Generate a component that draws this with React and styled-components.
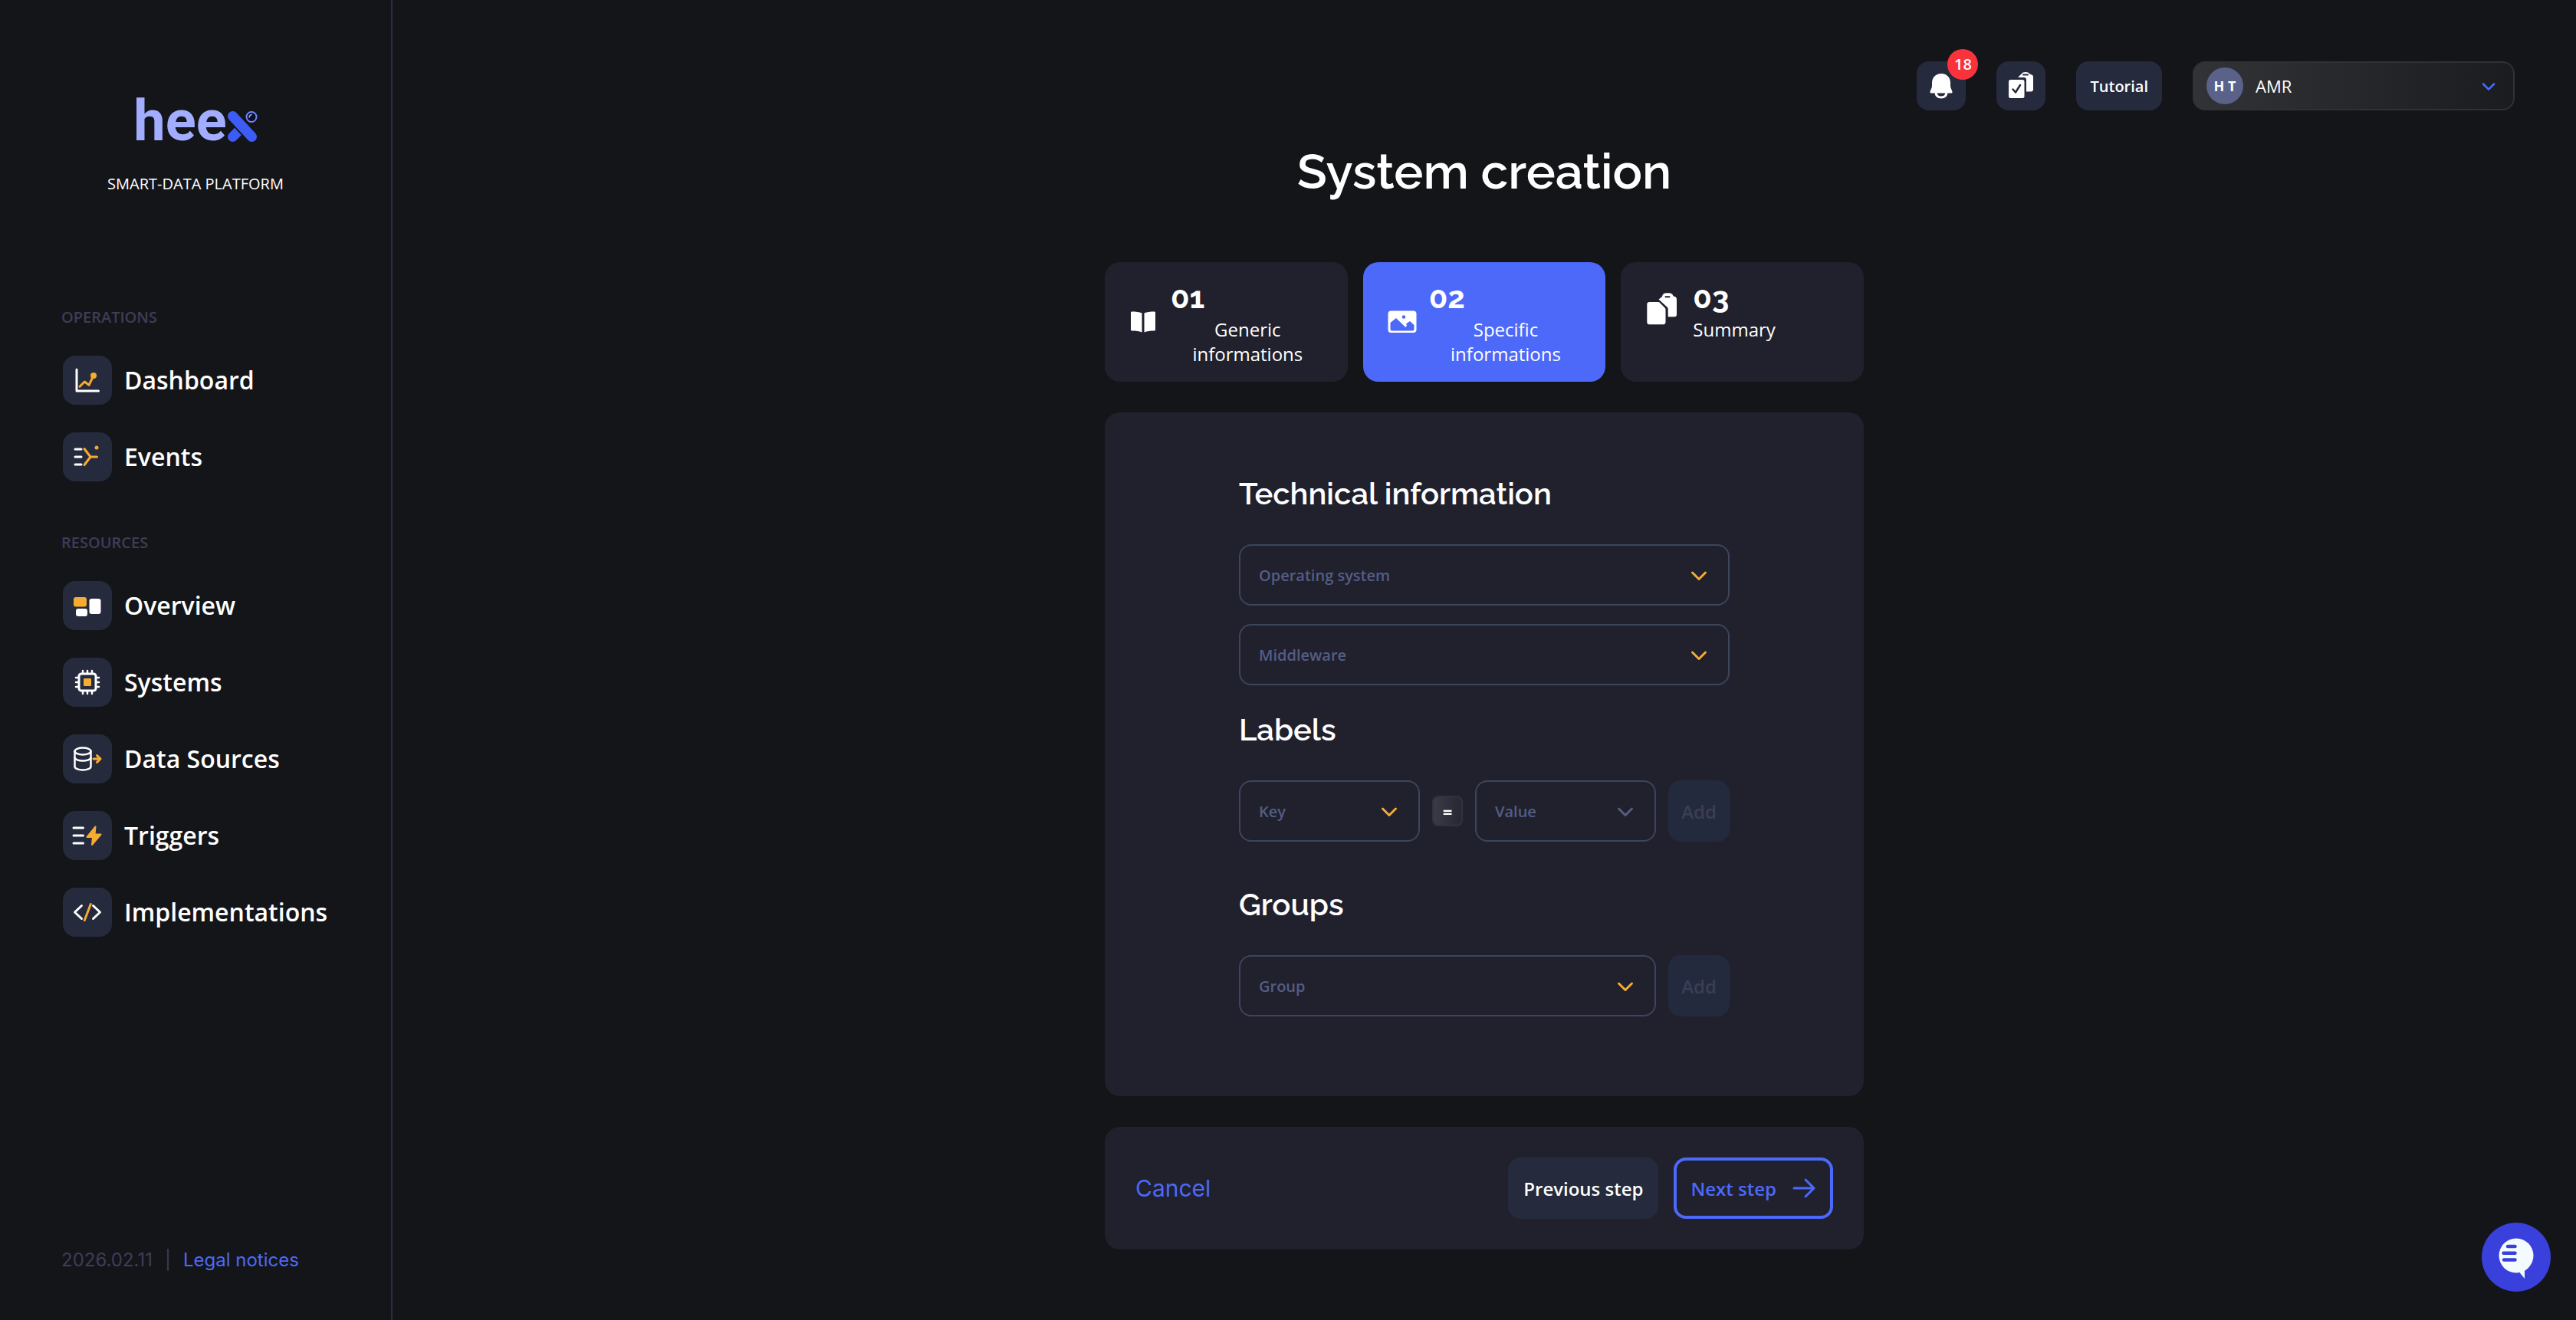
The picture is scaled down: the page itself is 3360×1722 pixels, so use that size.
import React from "react"
import styled, { createGlobalStyle } from "styled-components"

const colors = {
  bg: "#141519",
  panel: "#20212d",
  tile: "#252a3d",
  line: "#2c2b41",
  border: "#3c455e",
  muted: "#3d3d57",
  placeholder: "#545d85",
  primary: "#4c69f9",
  orange: "#f6ab33",
  white: "#ffffff",
}

const GlobalStyle = createGlobalStyle`
  *,
  *::before,
  *::after {
    box-sizing: border-box;
  }

  body {
    margin: 0;
    background: ${colors.bg};
    color: ${colors.white};
    font-family: "Open Sans", sans-serif;
    font-size: 24px;
  }

  h1,
  h2,
  p,
  ul {
    margin: 0;
    padding: 0;
  }

  button,
  select {
    font-family: inherit;
    cursor: pointer;
  }

  a {
    text-decoration: none;
  }
`

const Layout = styled.div`
  display: flex;
  min-height: 100vh;
`

/* ---------- sidebar ---------- */

const Sidebar = styled.aside`
  display: flex;
  flex-direction: column;
  flex: none;
  width: 512px;
  padding: 112px 80px 62px;
  border-right: 2px solid ${colors.line};
`

const Brand = styled.div`
  display: flex;
  flex-direction: column;
  align-items: center;
  gap: 20px;
`

const Logo = styled.a`
  display: flex;
  align-items: flex-end;
  height: 92px;
  color: #a3adff;
  font-family: Roboto, sans-serif;
  font-size: 74px;
  font-weight: 700;
  line-height: 92px;

  svg {
    width: 40px;
    height: 42px;
    margin-bottom: 18px;
  }
`

const Tagline = styled.p`
  font-size: 20px;
  line-height: 32px;
`

const NavGroup = styled.nav`
  display: flex;
  flex-direction: column;
  margin-top: ${(props) => (props.$first ? "142px" : "64px")};
`

const NavTitle = styled.h2`
  margin-bottom: 34px;
  color: ${colors.muted};
  font-size: 20px;
  font-weight: 600;
  line-height: 32px;
`

const NavList = styled.ul`
  display: flex;
  flex-direction: column;
  gap: 36px;
  list-style: none;
`

const NavLink = styled.a`
  display: flex;
  align-items: center;
  gap: 16px;
  padding-left: 2px;
  color: ${colors.white};
  font-size: 32px;
  font-weight: 600;
  line-height: 64px;
  white-space: nowrap;
`

const Tile = styled.svg`
  flex: none;
  width: 64px;
  height: 64px;
  border-radius: 16px;
  background: ${colors.tile};
  fill: none;
  stroke: ${colors.white};
  stroke-width: 3;
  stroke-linecap: round;
  stroke-linejoin: round;
`

const SideFooter = styled.footer`
  display: flex;
  gap: 16px;
  margin-top: auto;
  color: ${colors.muted};
  font-family: Inter, sans-serif;
  line-height: 32px;

  a {
    color: ${colors.primary};
  }
`

/* ---------- top bar ---------- */

const Main = styled.main`
  display: flex;
  flex-direction: column;
  flex: 1;
  padding-bottom: 80px;
`

const TopBar = styled.header`
  display: flex;
  justify-content: flex-end;
  gap: 40px;
  padding: 80px 80px 0;
`

const IconButton = styled.button`
  position: relative;
  width: 64px;
  height: 64px;
  padding: 0;
  border: 0;
  border-radius: 16px;
  background: ${colors.tile};

  svg {
    display: block;
  }
`

const Badge = styled.span`
  position: absolute;
  top: -16px;
  right: -16px;
  width: 40px;
  height: 40px;
  border-radius: 50%;
  background: #f8333c;
  color: ${colors.white};
  font-size: 20px;
  font-weight: 600;
  line-height: 40px;
`

const TutorialButton = styled.button`
  height: 64px;
  padding: 0 18px;
  border: 0;
  border-radius: 16px;
  background: ${colors.tile};
  color: ${colors.white};
  font-size: 20px;
  font-weight: 600;
`

const AccountBox = styled.div`
  display: grid;
  grid-template-columns: 48px 1fr 20px;
  align-items: center;
  width: 420px;
  height: 64px;
  padding: 0 22px 0 16px;
  border: 2px solid #303136;
  border-radius: 16px;
  background: linear-gradient(90deg, #323336, #1b1c20);

  svg {
    grid-area: 1 / 3;
    pointer-events: none;
  }
`

const Avatar = styled.span`
  grid-area: 1 / 1;
  width: 48px;
  height: 48px;
  border-radius: 50%;
  background: #5a6289;
  font-size: 18px;
  font-weight: 700;
  line-height: 48px;
  text-align: center;
`

const AccountSelect = styled.select`
  grid-area: 1 / 2 / 2 / 4;
  height: 48px;
  padding: 0 16px;
  border: 0;
  outline: 0;
  appearance: none;
  background: transparent;
  color: ${colors.white};
  font-size: 22px;
`

/* ---------- content ---------- */

const Title = styled.h1`
  margin: 40px 0 78px;
  font-family: Raleway, Lato, sans-serif;
  font-size: 64px;
  font-weight: 600;
  line-height: 80px;
  text-align: center;
`

const Content = styled.div`
  display: flex;
  flex-direction: column;
  gap: 40px;
  width: 100%;
  max-width: 990px;
  margin: 0 auto;
`

const Steps = styled.div`
  display: grid;
  grid-template-columns: repeat(3, 1fr);
  gap: 20px;
`

const Step = styled.button`
  display: flex;
  align-items: flex-start;
  padding: 20px 30px;
  border: 0;
  border-radius: 20px;
  background: ${(props) => (props.$active ? colors.primary : colors.panel)};
  color: ${colors.white};
  text-align: left;
`

const StepBody = styled.span`
  display: flex;
  align-items: center;
  gap: 16px;
  width: 100%;

  svg {
    flex: none;
  }
`

const StepText = styled.span`
  display: flex;
  flex: 1;
  flex-direction: column;
  font-size: 24px;
  line-height: 32px;
`

const StepNumber = styled.span`
  font-family: Raleway, Lato, sans-serif;
  font-size: 40px;
  font-weight: 700;
  line-height: 52px;
`

const StepLabel = styled.span`
  text-align: ${(props) => (props.$center ? "center" : "left")};
`

const Panel = styled.section`
  padding: 82px 175px 104px;
  border-radius: 20px;
  background: ${colors.panel};
`

const SectionTitle = styled.h2`
  margin: ${(props) => props.$top || 0}px 0 42px;
  font-family: Raleway, Lato, sans-serif;
  font-size: 40px;
  font-weight: 600;
  line-height: 48px;
`

const Fields = styled.div`
  display: flex;
  flex-direction: column;
  gap: 24px;
`

const Row = styled.div`
  display: flex;
  align-items: center;
  gap: 16px;
`

const SelectBox = styled.div`
  display: grid;
  grid-template-columns: 1fr 24px 26px;
  flex: 1;
  align-items: center;
  height: 80px;
  border: 2px solid ${colors.border};
  border-radius: 16px;
  color: ${(props) => (props.$disabled ? colors.placeholder : colors.orange)};

  svg {
    grid-area: 1 / 2;
    pointer-events: none;
  }
`

const Select = styled.select`
  grid-area: 1 / 1 / 2 / 4;
  width: 100%;
  height: 76px;
  padding: 0 24px;
  border: 0;
  outline: 0;
  appearance: none;
  background: transparent;
  color: ${colors.placeholder};
  font-size: 20px;
  font-weight: 600;
  opacity: 1;
`

const Equals = styled.span`
  width: 40px;
  height: 40px;
  border: 2px solid #31323c;
  border-radius: 8px;
  background: linear-gradient(90deg, #3a3b45, #262732);
  font-size: 22px;
  font-weight: 700;
  line-height: 36px;
  text-align: center;
`

const AddButton = styled.button`
  width: 80px;
  height: 80px;
  padding: 0;
  border: 0;
  border-radius: 16px;
  background: #242a3d;
  color: #3b3e56;
  font-size: 24px;
  font-weight: 600;
`

const Actions = styled.section`
  display: flex;
  align-items: center;
  gap: 20px;
  padding: 40px;
  border-radius: 20px;
  background: ${colors.panel};
`

const CancelButton = styled.button`
  margin-right: auto;
  padding: 0;
  border: 0;
  background: none;
  color: ${colors.primary};

  && {
    font-family: Inter, sans-serif;
    font-size: 30px;
  }
`

const StepButton = styled.button`
  display: flex;
  align-items: center;
  gap: 20px;
  height: 80px;
  padding: 0 ${(props) => (props.$outline ? 18 : 20)}px;
  border: ${(props) => (props.$outline ? `4px solid ${colors.primary}` : 0)};
  border-radius: 16px;
  background: ${(props) => (props.$outline ? "transparent" : colors.tile)};
  color: ${(props) => (props.$outline ? colors.primary : colors.white)};
  font-size: 24px;
  font-weight: 600;
`

const ChatButton = styled.button`
  position: fixed;
  right: 33px;
  bottom: 37px;
  width: 90px;
  height: 90px;
  padding: 0;
  border: 0;
  border-radius: 50%;
  background: #3940dc;

  svg {
    display: block;
  }
`

/* ---------- icons ---------- */

const LogoMark = () => (
  <svg viewBox="0 0 40 42" fill="none" strokeLinecap="round">
    <path d="M7.500 34.500L15 27" stroke="#3d5bf5" strokeWidth="13" />
    <path d="M7.500 7.500L32.500 34.500" stroke={colors.bg} strokeWidth="17" />
    <path d="M7.500 7.500L32.500 34.500" stroke="#3d5bf5" strokeWidth="13" />
    <circle cx="32" cy="8.500" r="8.500" fill={colors.bg} />
    <circle cx="32" cy="8.500" r="6.500" fill="#0b0f2a" stroke="#7088ff" strokeWidth="2" />
    <path d="M29 9a4 4 0 0 1 3-3.500" stroke="#a3adff" strokeWidth="1.500" />
  </svg>
)

const Chevron = ({ size = 24, color = "currentColor" }) => (
  <svg width={size} height={size} viewBox="0 0 24 24" fill="none" stroke={color} strokeWidth="3" strokeLinecap="round" strokeLinejoin="round">
    <path d="M3.500 9l8.500 8.500l8.500-8.500" />
  </svg>
)

const DashboardIcon = () => (
  <>
    <path d="M18 18v28h28.500" />
    <path d="M22 40.300l6.300-6.300l5.700 4.300l6-12.300" stroke={colors.orange} />
    <circle cx="40" cy="26" r="4" fill={colors.orange} stroke="none" />
  </>
)

const EventsIcon = () => (
  <>
    <path d="M16 22h8M16 32h8M16 42h8" />
    <path d="M28 21.500l8 10.500l-8 10.500M36 32h8.500" stroke={colors.orange} />
    <circle cx="44" cy="20" r="2.500" fill={colors.orange} stroke="none" />
  </>
)

const OverviewIcon = () => (
  <g stroke="none" fill={colors.white}>
    <rect x="14" y="21" width="17" height="12.500" rx="3" fill={colors.orange} />
    <rect x="34.500" y="23" width="15" height="20" rx="3" />
    <rect x="17" y="36" width="15" height="10" rx="3" />
  </g>
)

const SystemsIcon = () => (
  <>
    <rect x="21" y="21" width="22" height="22" rx="3" />
    <path
      d="M26 20v-3M32 20v-3M38 20v-3M26 47v-3M32 47v-3M38 47v-3M20 26h-3M20 32h-3M20 38h-3M47 26h-3M47 32h-3M47 38h-3"
      strokeWidth="2.500"
    />
    <rect x="27" y="27" width="10" height="10" rx="1" fill={colors.orange} stroke="none" />
  </>
)

const DataSourcesIcon = () => (
  <>
    <g strokeWidth="2.500">
      <ellipse cx="26" cy="22" rx="10.500" ry="4.500" />
      <path d="M15.500 22v20c0 2.500 4.500 4.500 10.500 4.500s10.500-2 10.500-4.500v-20" />
      <path d="M15.500 31c2 2.500 6 3.500 10.500 3.500s8.500-1 10.500-3.500" />
    </g>
    <path d="M40 32h9M44.500 27.500l4.500 4.500l-4.500 4.500" stroke={colors.orange} />
  </>
)

const TriggersIcon = () => (
  <>
    <path d="M14 22h12.500M14 32h12.500M14 42h12.500" />
    <path
      d="M42.500 20.500L31.500 34h7.500l-1 10L49.500 30.500h-8z"
      fill={colors.orange}
      stroke={colors.orange}
      strokeWidth="2"
    />
  </>
)

const ImplementationsIcon = () => (
  <>
    <path d="M24.500 23.500l-9 8.500l9 8.500M39.500 23.500l9 8.500l-9 8.500" />
    <path d="M36.300 21.500l-8 21" stroke={colors.orange} />
  </>
)

const BellIcon = () => (
  <svg width="64" height="64" viewBox="0 0 64 64" fill="none">
    <path d="M25 40c0 5 3 7 7 7s7-2 7-7" stroke={colors.white} strokeWidth="3" />
    <path
      d="M32 16c-7 0-12 5-12 12v4c0 3-2.500 6-2.500 8c0 1 .5 1.500 1.500 1.500h26c1 0 1.500-.5 1.500-1.500c0-2-2.500-5-2.500-8v-4c0-7-5-12-12-12z"
      fill={colors.white}
    />
  </svg>
)

const TasksIcon = () => (
  <svg width="64" height="64" viewBox="0 0 64 64" fill="none">
    <path
      d="M28 21l4.500-4.500a6 4 0 0 1 11 0l2.500 1a3 3 0 0 1 2 3v16a3 3 0 0 1-3 3h-6v-15.500a3 3 0 0 0-3-3z"
      fill={colors.white}
    />
    <path d="M35 17.500h6" stroke={colors.tile} strokeWidth="2" strokeLinecap="round" />
    <rect x="16" y="24" width="20.500" height="24" rx="2.500" fill={colors.white} />
    <path d="M21.500 36.500l3.500 4l6-9.500" stroke={colors.tile} strokeWidth="2.500" strokeLinecap="round" strokeLinejoin="round" />
  </svg>
)

const BookIcon = () => (
  <svg width="40" height="40" viewBox="0 0 40 40" fill={colors.white}>
    <path d="M18.500 8.500v25c-3.500-1.500-8-2-13-2a1.500 1.500 0 0 1-1.500-1.500V8c0-1 .5-1.500 1.500-1.500c5 0 9.500.5 13 2z" />
    <path d="M21.500 8.500v25c3.500-1.500 8-2 13-2a1.500 1.500 0 0 0 1.500-1.500V8c0-1-.5-1.500-1.500-1.500c-5 0-9.500.5-13 2z" />
  </svg>
)

const ImageIcon = () => (
  <svg width="40" height="40" viewBox="0 0 40 40" fill="none">
    <rect x="2.500" y="5.500" width="37" height="28.500" rx="4" fill={colors.white} />
    <path
      d="M5.500 21l7.500-6l12.500 12l1.500-2.500l-1-2l5-3.500l5.500 5v5.500a2 2 0 0 1-2 2h-27a2 2 0 0 1-2-2z"
      fill={colors.primary}
    />
    <circle cx="23" cy="13.500" r="2.300" fill={colors.primary} />
  </svg>
)

const PasteIcon = () => (
  <svg width="48" height="48" viewBox="0 0 48 48" fill={colors.white}>
    <path d="M7.300 14H19a3 3 0 0 1 2 1l6.500 6.500a3 3 0 0 1 1 2V40.300a3 3 0 0 1-3 3H7.300a3 3 0 0 1-3-3V17a3 3 0 0 1 3-3z" />
    <path d="M19.500 10.500L24 7a6 5 0 0 1 5-4.700h4.500a6 5 0 0 1 5 4l1.500.5a4 4 0 0 1 3 4v19.500a3 3 0 0 1-3 3h-8.300V23a3 3 0 0 0-1-2.200z" />
    <path d="M28.500 7.200h5" stroke={colors.panel} strokeWidth="2" strokeLinecap="round" />
  </svg>
)

const ArrowIcon = () => (
  <svg width="32" height="32" viewBox="0 0 32 32" fill="none" stroke="currentColor" strokeWidth="3" strokeLinecap="round" strokeLinejoin="round">
    <path d="M3 16h26M18 5l11 11l-11 11" />
  </svg>
)

const ChatIcon = () => (
  <svg width="90" height="90" viewBox="0 0 90 90" fill="none">
    <circle cx="45" cy="43" r="22.500" fill="#f4fbff" />
    <path d="M49 64.500l7 8.500v-12z" fill="#f4fbff" />
    <path d="M34 31h9.500M28.500 39.700h15M29 48.500h14.500" stroke="#3940dc" strokeWidth="4.500" strokeLinecap="round" />
  </svg>
)

/* ---------- page ---------- */

const operations = [
  { label: "Dashboard", icon: <DashboardIcon /> },
  { label: "Events", icon: <EventsIcon /> },
]

const resources = [
  { label: "Overview", icon: <OverviewIcon /> },
  { label: "Systems", icon: <SystemsIcon /> },
  { label: "Data Sources", icon: <DataSourcesIcon /> },
  { label: "Triggers", icon: <TriggersIcon /> },
  { label: "Implementations", icon: <ImplementationsIcon /> },
]

const steps = [
  { number: "01", label: "Generic informations", icon: <BookIcon />, center: true },
  { number: "02", label: "Specific informations", icon: <ImageIcon />, center: true, active: true },
  { number: "03", label: "Summary", icon: <PasteIcon /> },
]

const Navigation = ({ title, items, first }) => (
  <NavGroup aria-label={title} $first={first}>
    <NavTitle>{title}</NavTitle>
    <NavList>
      {items.map(({ label, icon }) => (
        <li key={label}>
          <NavLink href="#">
            <Tile viewBox="0 0 64 64">{icon}</Tile>
            {label}
          </NavLink>
        </li>
      ))}
    </NavList>
  </NavGroup>
)

const SelectField = ({ label, disabled }) => (
  <SelectBox $disabled={disabled}>
    <Select aria-label={label} disabled={disabled}>
      <option>{label}</option>
    </Select>
    <Chevron />
  </SelectBox>
)

export default function App() {
  return (
    <>
      <GlobalStyle />
      <Layout>
        <Sidebar>
          <Brand>
            <Logo href="#">
              hee
              <LogoMark />
            </Logo>
            <Tagline>SMART-DATA PLATFORM</Tagline>
          </Brand>
          <Navigation title="OPERATIONS" items={operations} first />
          <Navigation title="RESOURCES" items={resources} />
          <SideFooter>
            <span>2026.02.11</span>
            <span>|</span>
            <a href="#">Legal notices</a>
          </SideFooter>
        </Sidebar>

        <Main>
          <TopBar>
            <IconButton aria-label="Notifications">
              <BellIcon />
              <Badge>18</Badge>
            </IconButton>
            <IconButton aria-label="Tasks">
              <TasksIcon />
            </IconButton>
            <TutorialButton>Tutorial</TutorialButton>
            <AccountBox>
              <Avatar>H T</Avatar>
              <AccountSelect aria-label="Account">
                <option>AMR</option>
              </AccountSelect>
              <Chevron size={20} color={colors.primary} />
            </AccountBox>
          </TopBar>

          <Title>System creation</Title>

          <Content>
            <Steps>
              {steps.map(({ number, label, icon, center, active }) => (
                <Step key={number} $active={active}>
                  <StepBody>
                    {icon}
                    <StepText>
                      <StepNumber>{number}</StepNumber>
                      <StepLabel $center={center}>{label}</StepLabel>
                    </StepText>
                  </StepBody>
                </Step>
              ))}
            </Steps>

            <Panel>
              <SectionTitle>Technical information</SectionTitle>
              <Fields>
                <SelectField label="Operating system" />
                <SelectField label="Middleware" />
              </Fields>

              <SectionTitle $top={34}>Labels</SectionTitle>
              <Row>
                <SelectField label="Key" />
                <Equals>=</Equals>
                <SelectField label="Value" disabled />
                <AddButton disabled>Add</AddButton>
              </Row>

              <SectionTitle $top={58}>Groups</SectionTitle>
              <Row>
                <SelectField label="Group" />
                <AddButton disabled>Add</AddButton>
              </Row>
            </Panel>

            <Actions>
              <CancelButton>Cancel</CancelButton>
              <StepButton>Previous step</StepButton>
              <StepButton $outline>
                Next step
                <ArrowIcon />
              </StepButton>
            </Actions>
          </Content>
        </Main>
      </Layout>
      <ChatButton aria-label="Open chat">
        <ChatIcon />
      </ChatButton>
    </>
  )
}
